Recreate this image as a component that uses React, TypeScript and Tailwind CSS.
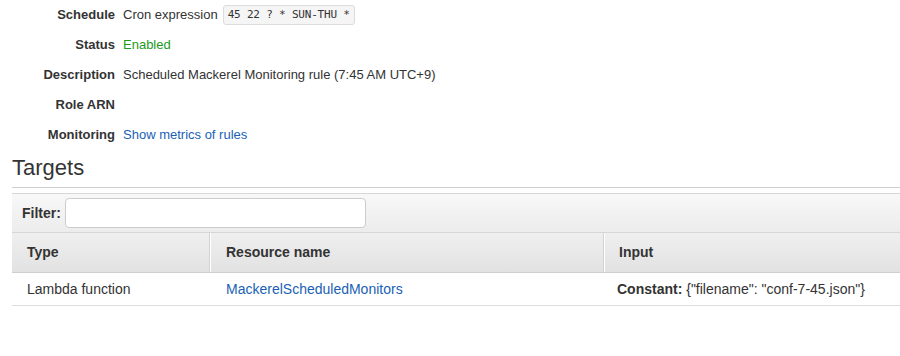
import React from "react";

const rows = [
  { label: "Schedule", value: "cron" },
  { label: "Status", value: "status" },
  { label: "Description", value: "Scheduled Mackerel Monitoring rule (7:45 AM UTC+9)" },
  { label: "Role ARN", value: "" },
  { label: "Monitoring", value: "link" },
];

function Value({ v }: { v: string }) {
  if (v === "cron")
    return (
      <span className="flex items-center gap-[5px]">
        Cron expression
        <code className="px-[4px] h-[20px] leading-[18px] border border-[#dcdcdc] bg-[#f5f5f5] rounded-[3px] text-[11px] tracking-[-0.2px] text-[#333] font-['DejaVu_Sans_Mono',monospace] whitespace-pre">
          45 22 ? * SUN-THU *
        </code>
      </span>
    );
  if (v === "status") return <span className="text-[#1d9a1d]">Enabled</span>;
  if (v === "link") return <span className="text-[#1a5fb4]">Show metrics of rules</span>;
  return <span>{v}</span>;
}

export default function App() {
  return (
    <div className="w-[900px] h-[356px] bg-white text-[#333] text-[13px] font-['Liberation_Sans',Arial,sans-serif] overflow-hidden">
      <div className="flex flex-col">
        {rows.map((r) => (
          <div key={r.label} className="flex items-center h-[30px]">
            <div className="w-[115px] text-right font-bold">{r.label}</div>
            <div className="pl-[8px]">
              <Value v={r.value} />
            </div>
          </div>
        ))}
      </div>
      <div className="pl-[12px] mt-[5px]">
        <h2 className="text-[22px] leading-[26px] text-[#333] font-normal">Targets</h2>
        <div className="mt-[6px] border-t border-[#cfcfcf]" />
        <div className="text-[14px]">
          <div className="mt-[5px] border-t border-[#d0d0d0] bg-gradient-to-b from-[#f8f8f8] to-[#ececec] h-[40px] flex items-center pl-[10px] gap-[4px] border-b border-[#d6d6d6]">
            <span className="font-bold">Filter:</span>
            <input className="w-[301px] h-[30px] bg-white border border-[#cccccc] rounded-[4px] outline-none" />
          </div>
          <div className="grid grid-cols-[198px_394px_1fr] h-[40px] bg-gradient-to-b from-[#efefef] to-[#e2e2e2] border-b border-[#cfcfcf] font-bold">
            <div className="flex items-center pl-[15px] border-r border-[#d3d3d3]">Type</div>
            <div className="flex items-center pl-[15px] border-l border-white border-r border-r-[#d3d3d3]">Resource name</div>
            <div className="flex items-center pl-[14px] border-l border-white">Input</div>
          </div>
          <div className="grid grid-cols-[198px_394px_1fr] h-[33px] border-b border-[#dedede] items-center">
            <div className="pl-[15px]">Lambda function</div>
            <div className="pl-[16px] text-[#1a5fb4]">MackerelScheduledMonitors</div>
            <div className="pl-[13px]">
              <span className="font-bold">Constant:</span> {'{"filename": "conf-7-45.json"}'}
            </div>
          </div>
        </div>
      </div>
    </div>
  );
}
